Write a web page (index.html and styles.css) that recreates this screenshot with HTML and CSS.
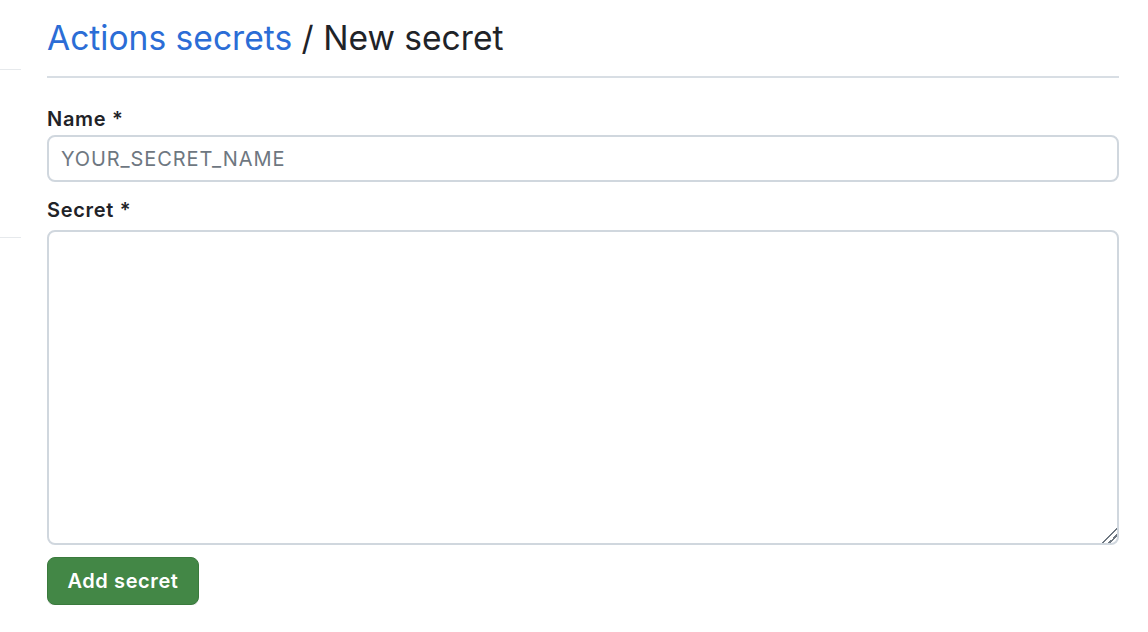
FILE: index.html
```html
<!DOCTYPE html>
<html lang="en">
<head>
<meta charset="utf-8">
<title>New secret</title>
<link rel="stylesheet" href="styles.css">
</head>
<body>
<div class="layout">
  <aside class="sidebar">
    <div class="side-line first"></div>
    <div class="side-line second"></div>
  </aside>
  <main class="main">
    <div class="subhead">
      <h2 class="subhead-heading"><a class="crumb" href="#">Actions secrets</a> / New secret</h2>
    </div>
    <form class="form">
      <div class="form-group">
        <label class="label label-name" for="name">Name *</label>
        <input class="input" id="name" type="text" placeholder="YOUR_SECRET_NAME">
      </div>
      <div class="form-group">
        <label class="label label-secret" for="secret">Secret *</label>
        <textarea class="textarea" id="secret"></textarea>
      </div>
      <button class="btn-primary" type="button">Add secret</button>
    </form>
  </main>
</div>
</body>
</html>
```

FILE: styles.css
```css
* { box-sizing: border-box; }
html, body {
  margin: 0;
  background: #ffffff;
  font-family: Inter, "Liberation Sans", Arial, sans-serif;
  color: #1f2328;
}
.layout {
  display: flex;
  gap: 26px;
}
.sidebar {
  width: 21px;
  flex: none;
}
.side-line {
  height: 1px;
  background: #e6e9ec;
}
.side-line.first { margin-top: 69px; }
.side-line.second { margin-top: 167px; }
.main {
  width: 1072px;
  flex: none;
}
.subhead {
  padding-top: 18px;
  padding-bottom: 18px;
  border-bottom: 2px solid #d8dee4;
}
.subhead-heading {
  margin: 0;
  font-size: 33.6px;
  font-weight: 400;
  line-height: 40px;
}
.crumb {
  color: #2b6dd6;
  text-decoration: none;
}
.form {
  padding-top: 29px;
}
.form-group {
  display: flex;
  flex-direction: column;
}
.label {
  font-size: 20px;
  font-weight: 600;
  line-height: 24px;
  letter-spacing: 0.7px;
}
.label-name { margin-bottom: 4px; }
.label-secret { margin-top: 16px; margin-bottom: 8px; }
.input, .textarea {
  width: 100%;
  border: 2px solid #d0d7de;
  border-radius: 8px;
  background: #ffffff;
  font-family: inherit;
  font-size: 20px;
  color: #1f2328;
  outline: none;
}
.input {
  height: 47px;
  padding: 0 12px;
  letter-spacing: 0.9px;
}
.input::placeholder { color: #6e7781; }
.textarea {
  height: 315px;
  resize: vertical;
  padding: 10px 12px;
}
.textarea::-webkit-resizer {
  background: linear-gradient(135deg,
    transparent 0 48%,
    #6e7781 48% 56%,
    transparent 56% 70%,
    #6e7781 70% 78%,
    transparent 78%);
}
.btn-primary {
  margin-top: 12px;
  width: 152px;
  height: 48px;
  border: 1px solid #3a7a3d;
  border-radius: 8px;
  background: #438746;
  color: #ffffff;
  font-family: inherit;
  font-size: 20px;
  font-weight: 600;
  letter-spacing: 0.6px;
  box-shadow: 0 1px 0 rgba(27,31,36,0.1);
  cursor: pointer;
}
```
